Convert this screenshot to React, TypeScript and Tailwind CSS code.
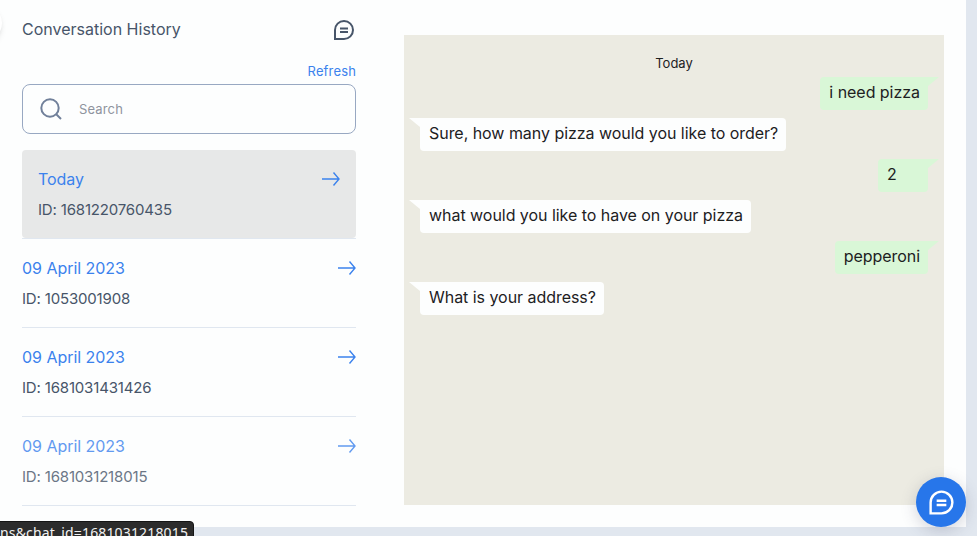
import React from "react";

type Conversation = { title: string; id: string; active?: boolean; faded?: boolean };
type Message = { text: string; mine: boolean };

const conversations: Conversation[] = [
  { title: "Today", id: "1681220760435", active: true },
  { title: "09 April 2023", id: "1053001908" },
  { title: "09 April 2023", id: "1681031431426" },
  { title: "09 April 2023", id: "1681031218015", faded: true },
];

const messages: Message[] = [
  { text: "i need pizza", mine: true },
  { text: "Sure, how many pizza would you like to order?", mine: false },
  { text: "2", mine: true },
  { text: "what would you like to have on your pizza", mine: false },
  { text: "pepperoni", mine: true },
  { text: "What is your address?", mine: false },
];

function ChatIcon({ className }: { className: string }) {
  return (
    <svg viewBox="0 0 24 24" fill="none" stroke="currentColor" strokeWidth="2" className={className}>
      <path d="M3 12a9 9 0 1 1 9 9H3z" />
      <path d="M8 10.500h8M8 14h8" />
    </svg>
  );
}

function ArrowIcon() {
  return (
    <svg viewBox="0 0 18 16" fill="none" stroke="currentColor" strokeWidth="1.4" className="h-4 w-[18px]">
      <path d="M0 8h17M11.5 1.5L17 8l-5.500 6.500" />
    </svg>
  );
}

function ConversationRow({ title, id, active, faded }: Conversation) {
  return (
    <div className="h-[89px] border-b border-[#e0e7f0]">
      <div className={`h-[88px] rounded-[4px] pt-[17px] ${active ? "bg-[#e7e8e8] px-4" : ""} ${faded ? "opacity-80" : ""}`}>
        <div className="flex h-6 items-center justify-between text-base tracking-[-0.04px] text-[#3b82ed]">
          <span>{title}</span>
          <ArrowIcon />
        </div>
        <div className="mt-2 text-[15px] leading-[22px] tracking-[-0.17px] text-[#475569]">ID: {id}</div>
      </div>
    </div>
  );
}

function Bubble({ text, mine }: Message) {
  return (
    <div className={`flex ${mine ? "justify-end" : "justify-start"}`}>
      <div
        className={`relative h-[33px] pl-[9px] pr-2 pt-[3px] text-base leading-6 tracking-[-0.04px] text-[#1d211f] ${
          mine ? "min-w-[50px] rounded-[4px] rounded-tr-none bg-[#d9f7d7]" : "rounded-[4px] rounded-tl-none bg-[#fdfefe]"
        }`}
      >
        {text}
        <svg
          viewBox="0 0 11 9"
          className={`absolute top-0 h-[9px] w-[11px] ${mine ? "-right-[11px] -scale-x-100 text-[#d9f7d7]" : "-left-[11px] text-[#fdfefe]"}`}
        >
          <path d="M0 0H11V9z" fill="currentColor" />
        </svg>
      </div>
    </div>
  );
}

export default function App() {
  return (
    <div className="relative h-[536px] w-[977px] overflow-hidden bg-[#e1e7ef] font-['Inter',sans-serif]">
      <div className="flex h-[527px] w-[966px] bg-[#fdfefe]">
        <aside className="ml-[22px] w-[334px] pt-[17px]">
          <div className="flex h-6 items-center justify-between text-base text-[#475569]">
            <h1>Conversation History</h1>
            <ChatIcon className="mt-px h-6 w-6" />
          </div>
          <div className="mt-[19px] flex h-6 items-center justify-end pb-px text-[13px] tracking-[0.15px] text-[#3b82ed]">Refresh</div>
          <div className="flex h-[50px] items-center rounded-lg border border-[#98a8c2] pl-[17px]">
            <svg viewBox="0 0 22 22" fill="none" stroke="#71809a" strokeWidth="2" className="h-[22px] w-[22px]">
              <circle cx="10" cy="10" r="8.700" />
              <path d="M16 16l5 5" />
            </svg>
            <span className="ml-[17px] mt-px text-[13px] tracking-[0.15px] text-[#8f949e]">Search</span>
          </div>
          <div className="mt-4">
            {conversations.map((c) => (
              <ConversationRow key={c.id} {...c} />
            ))}
          </div>
        </aside>
        <main className="ml-12 mt-[35px] h-[470px] w-[540px] bg-[#ecebe2] px-4 pt-[18px]">
          <div className="text-center text-[13px] leading-5 text-[#1d211f]">Today</div>
          <div className="mt-1 flex flex-col gap-2">
            {messages.map((m) => (
              <Bubble key={m.text} {...m} />
            ))}
          </div>
        </main>
      </div>
      <div className="absolute -left-[36px] top-[4px] h-[38px] w-[38px] rounded-full bg-white shadow-md" />
      <button className="absolute left-[916px] top-[477px] flex h-[50px] w-[50px] items-center justify-center rounded-full bg-[#2776ea] text-white shadow-[0_4px_16px_rgba(60,60,90,0.22)]">
        <ChatIcon className="h-[29px] w-[29px]" />
      </button>
      <div className="absolute -left-1 top-[521px] h-6 w-[198px] whitespace-nowrap rounded-[4px] border border-[#151515] bg-[#2c2c2c] pl-[3px] pt-px font-['Noto_Sans',sans-serif] text-[14px] leading-5 tracking-[0.15px] text-[#f2f2f2]">
        ns&amp;chat_id=1681031218015
      </div>
    </div>
  );
}
